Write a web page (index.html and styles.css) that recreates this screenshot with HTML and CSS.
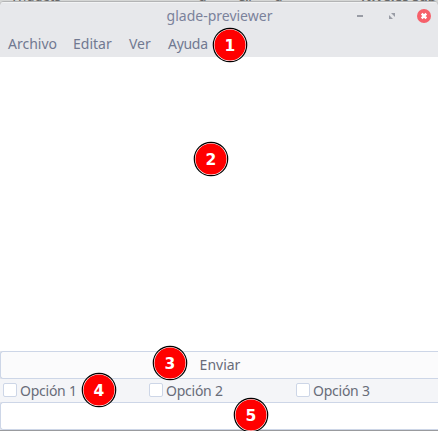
FILE: index.html
```html
<!DOCTYPE html>
<html lang="es">
<head>
<meta charset="utf-8">
<title>glade-previewer</title>
<link rel="stylesheet" href="styles.css">
</head>
<body>
<div class="desktop">
  <div class="behind"><span class="behind-left">Widgets</span><span class="behind-mid">g</span><span class="behind-mid2">&amp;,</span><span class="behind-mid3">g</span><span class="behind-right">Niveles Sup</span></div>
  <main class="window">
    <header class="titlebar">
      <h1 class="title">glade-previewer</h1>
      <svg class="controls" width="80" height="16" viewBox="0 0 80 16">
        <rect x="4" y="7" width="6" height="2" fill="#999ca5"/>
        <path d="M38 5h4v4zM36 7v4h4z" fill="#999ca5"/>
        <circle cx="71" cy="8" r="7" fill="#f6606a"/>
        <path d="M68.7 5.7l4.6 4.6m0-4.6l-4.6 4.6" stroke="#fff" stroke-width="2.4"/>
      </svg>
    </header>
    <nav class="menubar"><span class="m1">Archivo</span><span class="m2">Editar</span><span class="m3">Ver</span><span class="m4">Ayuda</span></nav>
    <section class="canvas"></section>
    <button class="send">Enviar</button>
    <div class="options">
      <label><i class="box"></i><span>Opción 1</span></label>
      <label><i class="box"></i><span>Opción 2</span></label>
      <label><i class="box"></i><span>Opción 3</span></label>
    </div>
    <div class="entry"></div>
  </main>
  <svg class="badge b1" viewBox="0 0 36 36"><circle class="ring" cx="18" cy="18" r="16.7"/><circle class="disc" cx="18" cy="18" r="15.5"/><text x="18" y="23.5">1</text></svg>
  <svg class="badge b2" viewBox="0 0 36 36"><circle class="ring" cx="18" cy="18" r="16.7"/><circle class="disc" cx="18" cy="18" r="15.5"/><text x="18" y="23.5">2</text></svg>
  <svg class="badge b3" viewBox="0 0 36 36"><circle class="ring" cx="18" cy="18" r="16.7"/><circle class="disc" cx="18" cy="18" r="15.5"/><text x="18" y="23.5">3</text></svg>
  <svg class="badge b4" viewBox="0 0 36 36"><circle class="ring" cx="18" cy="18" r="16.7"/><circle class="disc" cx="18" cy="18" r="15.5"/><text x="18" y="23.5">4</text></svg>
  <svg class="badge b5" viewBox="0 0 36 36"><circle class="ring" cx="18" cy="18" r="16.7"/><circle class="disc" cx="18" cy="18" r="15.5"/><text x="18" y="23.5">5</text></svg>
</div>
</body>
</html>
```
FILE: styles.css
```css
* { box-sizing: border-box; }
body { margin: 0; font-family: "Noto Sans", sans-serif; font-size: 14px; color: #686c79; }
.desktop { position: relative; width: 438px; height: 431px; overflow: hidden; background: #d5d6d5; display: flex; flex-direction: column; }
.behind { position: relative; height: 1px; flex: none; font-size: 14px; line-height: 18px; color: #666; }
.behind span { position: absolute; top: -13px; white-space: nowrap; }
.behind-left { left: 11px; font-size: 13px; }
.behind-mid { left: 198px; }
.behind-mid2 { left: 238px; }
.behind-mid3 { left: 274px; }
.behind-right { left: 361px; font-weight: bold; font-size: 13px; }
.window { position: relative; height: 429px; border-top: 1px solid #b3b4b5; border-radius: 4px 4px 0 0; background: #e7e8eb; display: flex; flex-direction: column; overflow: hidden; box-shadow: 0 1px 0 #999b9e; }
.titlebar { height: 30px; flex: none; display: grid; grid-template-columns: 1fr; border-top: 1px solid #f2f3f4; color: #7b829b; }
.title { grid-area: 1 / 1; margin: 0; font-size: 14px; font-weight: normal; line-height: 26px; text-align: center; padding-left: 1px; }
.controls { grid-area: 1 / 1; justify-self: end; margin: 5px 5px 0 0; width: 80px; }
.menubar { height: 25px; flex: none; display: flex; padding-left: 8px; line-height: 23px; color: #717991; }
.m1 { width: 65px; }
.m2 { width: 56px; }
.m3 { width: 39px; }
.m4 { letter-spacing: -.3px; }
.canvas { height: 294px; flex: none; background: #fff; }
.send { height: 28px; flex: none; border: 1px solid #cdd6e7; border-right: 0; border-radius: 3px 0 0 3px; background: #fbfbfc; font: inherit; color: inherit; padding: 0 0 0 1px; line-height: 26px; }
.options { height: 23px; flex: none; display: grid; grid-template-columns: 146px 147px 145px; background: #f4f5f8; }
.options label { display: flex; align-items: flex-start; padding-left: 3px; line-height: 24px; letter-spacing: -.25px; }
.box { width: 14px; height: 14px; margin: 4px 3px 0 0; flex: none; border: 1px solid #cdd6e7; border-radius: 2px; background: #fff; }
.entry { height: 28px; flex: none; border: 1px solid #cdd6e7; border-right: 0; border-radius: 3px 0 0 3px; background: #fff; }
.badge { position: absolute; width: 36px; height: 36px; }
.ring { fill: #fff; stroke: #000; stroke-width: 1.2; }
.disc { fill: #f00; }
.badge text { fill: #fff; font: bold 15.5px "DejaVu Sans", sans-serif; text-anchor: middle; }
.b1 { left: 212px; top: 27px; }
.b2 { left: 193px; top: 141px; }
.b3 { left: 152px; top: 345px; }
.b4 { left: 81px; top: 372px; }
.b5 { left: 233px; top: 397px; }
```
